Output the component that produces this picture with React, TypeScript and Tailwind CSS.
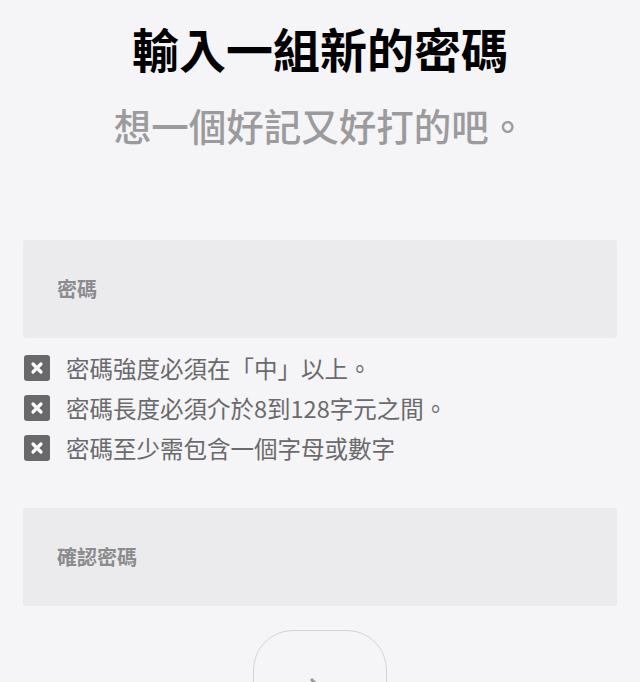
import React from 'react';

// 密碼規則清單
const RULES = [
  '密碼強度必須在「中」以上。',
  '密碼長度必須介於8到128字元之間。',
  '密碼至少需包含一個字母或數字',
];

function CrossBox() {
  return (
    <span className="flex h-[26px] w-[26px] shrink-0 items-center justify-center rounded-[3px] bg-[#69696b]">
      <svg width="14" height="14" viewBox="0 0 14 14">
        <path d="M3 3L11 11M11 3L3 11" stroke="#fff" strokeWidth="3.2" strokeLinecap="round" />
      </svg>
    </span>
  );
}

function Field({ label }: { label: string }) {
  return (
    <div className="flex h-[98px] items-center rounded-[2px] bg-[#ebeaec] pl-[34px]">
      <span className="text-[20px] font-bold text-[#8c8c8e]">{label}</span>
    </div>
  );
}

export default function App() {
  return (
    <div
      className="h-[682px] w-[640px] overflow-hidden bg-[#f5f4f6]"
      style={{ fontFamily: '"Noto Sans CJK TC", "Noto Sans", sans-serif' }}
    >
      <div className="flex flex-col items-center pt-[17px]">
        <h1 className="text-[47px] leading-[62px] font-bold text-black">輸入一組新的密碼</h1>
        <p className="mt-[22px] text-[37.5px] leading-[48px] font-medium text-[#9b9b9d]">想一個好記又好打的吧。</p>
      </div>

      <div className="mt-[91px] px-[23px]">
        <Field label="密碼" />

        {/* 規則 */}
        <ul className="mt-[17px] flex flex-col gap-[14px] pl-[1px]">
          {RULES.map((r) => (
            <li key={r} className="flex h-[26px] items-center gap-[16px]">
              <CrossBox />
              <span className="text-[23.5px] leading-[26px] text-[#6a6a6c]">{r}</span>
            </li>
          ))}
        </ul>

        <div className="mt-[47px]">
          <Field label="確認密碼" />
        </div>

        <div className="mt-[24px] flex justify-center">
          <button className="flex h-[134px] w-[134px] items-center justify-center rounded-[40px] border border-[#d4d4d6] bg-transparent">
            <svg width="30" height="44" viewBox="0 0 30 44">
              <path d="M6 4L24 22L6 40" fill="none" stroke="#9a9a9c" strokeWidth="3" />
            </svg>
          </button>
        </div>
      </div>
    </div>
  );
}
